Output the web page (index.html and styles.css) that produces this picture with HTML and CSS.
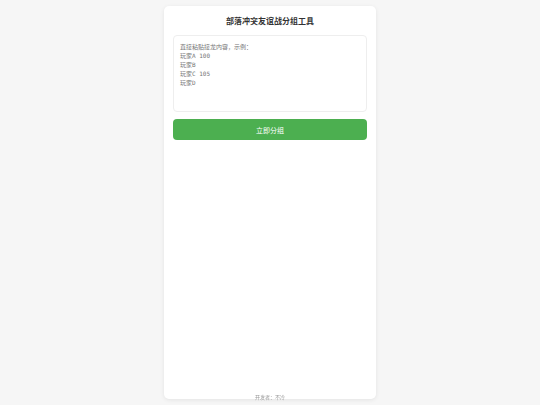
FILE: index.html
```html
<!DOCTYPE html>
<html lang="zh-CN">
<head>
<meta charset="UTF-8">
<meta name="viewport" content="width=device-width, initial-scale=1">
<title>部落冲突友谊战分组工具</title>
<link rel="stylesheet" href="styles.css">
</head>
<body>
<main class="container">
<h1 class="title">部落冲突友谊战分组工具</h1>
<textarea class="roster" aria-label="接龙内容" placeholder="直接粘贴接龙内容，示例：
玩家A 100
玩家B
玩家C 105
玩家D"></textarea>
<button class="submit" type="button">立即分组</button>
</main>
<footer class="footer">开发者：不冷</footer>
</body>
</html>
```
FILE: styles.css
```css
* {
  box-sizing: border-box;
}

body {
  display: flex;
  flex-direction: column;
  min-height: 100vh;
  margin: 0;
  padding: 6px;
  background: #f6f6f6;
  color: #333;
  font-family: "Noto Sans CJK SC", sans-serif;
}

.container {
  display: flex;
  flex: 1;
  flex-direction: column;
  width: 100%;
  max-width: 212px;
  margin: 0 auto;
  padding: 9px;
  border-radius: 5px;
  background: #fff;
  box-shadow: 0 1px 4px rgba(0, 0, 0, 0.08);
}

.title {
  margin: 0 0 8px;
  font-size: 8px;
  line-height: 12px;
  text-align: center;
}

.roster {
  width: 100%;
  height: 77px;
  margin: 0 0 7px;
  padding: 6px;
  border: 1px solid #eee;
  border-radius: 4px;
  font-family: "DejaVu Sans Mono", "Noto Sans CJK SC", monospace;
  font-size: 6px;
  line-height: 9px;
  resize: none;
}

.submit {
  width: 100%;
  height: 21px;
  padding: 0;
  border: 0;
  border-radius: 4px;
  background: #4caf50;
  color: #fff;
  font-family: inherit;
  font-size: 7px;
}

.footer {
  position: fixed;
  right: 0;
  bottom: 5px;
  left: 0;
  color: #999;
  font-size: 5px;
  line-height: 7px;
  text-align: center;
}
```
